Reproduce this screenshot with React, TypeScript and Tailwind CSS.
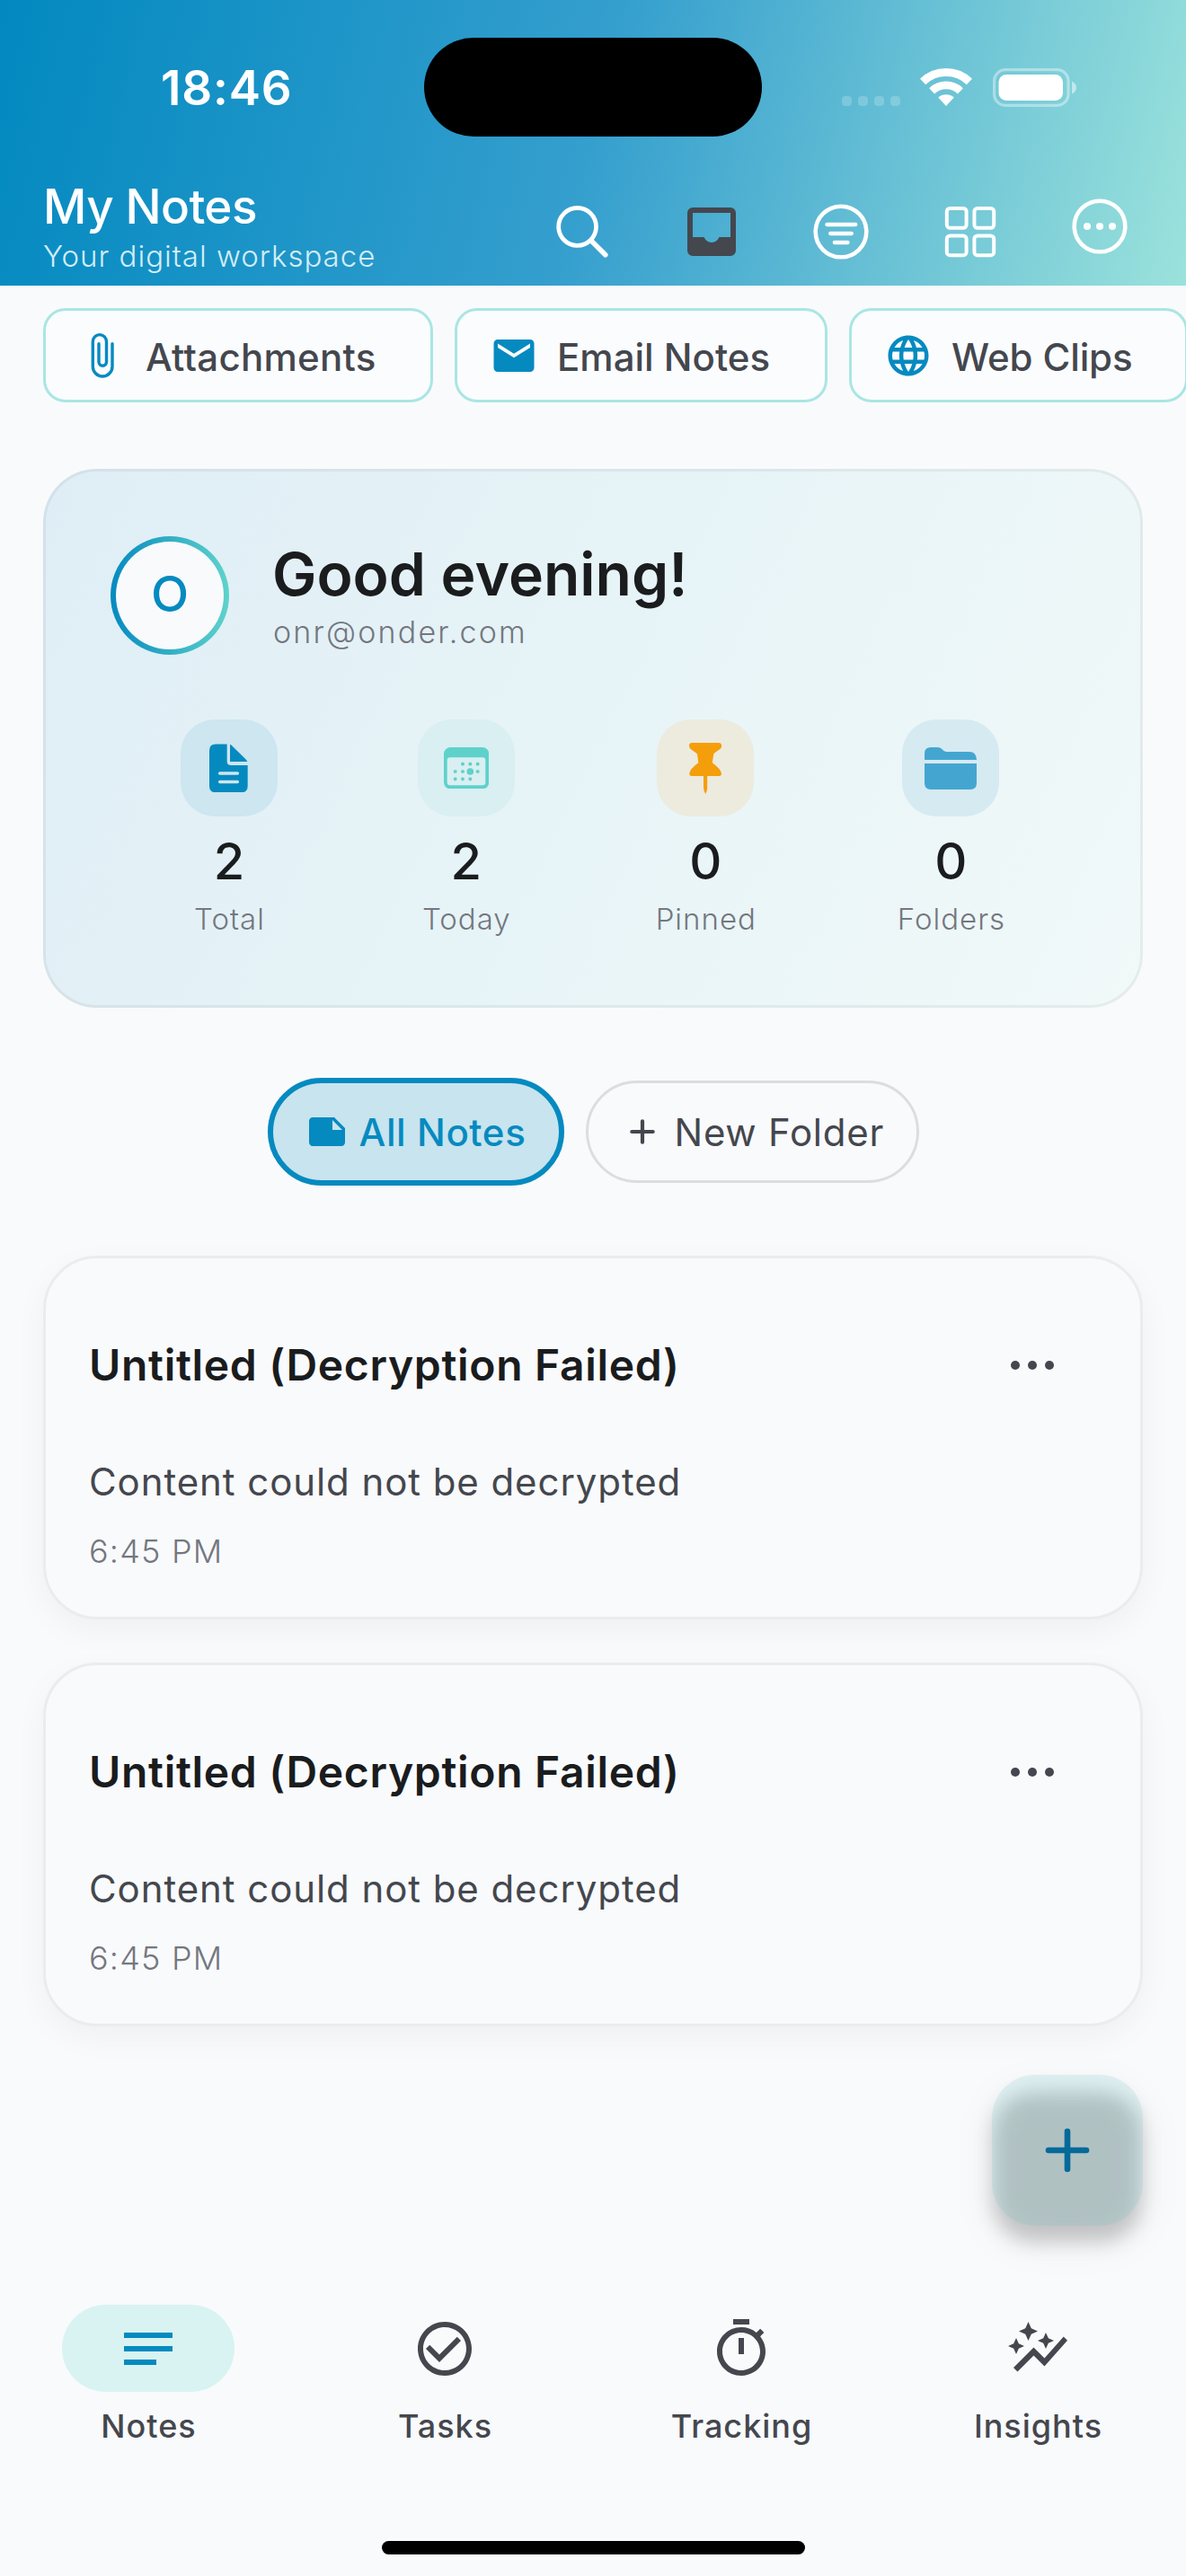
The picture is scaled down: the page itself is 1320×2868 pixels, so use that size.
import React from "react";
import {
  MdEmail,
  MdLanguage,
  MdNote,
  MdNotes,
  MdCheckCircleOutline,
  MdOutlineTimer,
  MdOutlineAutoGraph,
} from "react-icons/md";

/* ---------- status bar ---------- */

function Wifi() {
  return (
    <svg width="58" height="43" viewBox="0 0 58 43" fill="none" className="shrink-0">
      <path d="M3.1 14.9A37.5 37.5 0 0 1 54.9 14.9" stroke="#fff" strokeWidth="9" />
      <path d="M13.1 25.3A23 23 0 0 1 44.9 25.3" stroke="#fff" strokeWidth="8.6" />
      <path d="M29 42L20.2 32.6A13.3 13.3 0 0 1 37.8 32.6Z" fill="#fff" />
    </svg>
  );
}

function Battery() {
  return (
    <svg width="94" height="43" viewBox="0 0 94 43" fill="none" className="shrink-0">
      <rect x="1.6" y="1.6" width="82.4" height="39.8" rx="12.5" stroke="#fff" strokeOpacity="0.4" strokeWidth="3.2" />
      <rect x="6.5" y="7" width="71.5" height="29" rx="8.5" fill="#fff" />
      <path d="M88 14.5Q93 17 93 21.5T88 28.5Z" fill="#fff" fillOpacity="0.5" />
    </svg>
  );
}

function StatusBar() {
  return (
    <div className="flex h-[194px] items-center">
      <div className="w-[472px] shrink-0 pl-[179px] pt-[2px] text-[53px] leading-[66px] font-semibold tracking-[0.8px] text-white">
        18:46
      </div>
      <div className="h-[110px] w-[376px] shrink-0 rounded-full bg-black" />
      <div className="flex h-[43px] items-end pl-[89px]">
        <div className="mr-[22px] mb-[1px] flex gap-[7px]">
          {[0, 1, 2, 3].map((i) => (
            <div key={i} className="size-[11px] rounded-[4px] bg-white/20" />
          ))}
        </div>
        <Wifi />
        <div className="ml-[23px] flex">
          <Battery />
        </div>
      </div>
    </div>
  );
}

/* ---------- toolbar ---------- */

const SearchIcon = () => (
  <svg width="72" height="72" viewBox="0 0 72 72" fill="none" stroke="#fff" strokeLinecap="round">
    <circle cx="30.6" cy="30.4" r="20.9" strokeWidth="4.8" />
    <path d="M46 46L61.8 61.8" strokeWidth="5.6" />
  </svg>
);

const InboxIcon = () => (
  <svg width="72" height="72" viewBox="0 0 24 24" fill="#44474e">
    <path d="M5 21q-.825 0-1.413-.588T3 19V5q0-.825.588-1.413T5 3h14q.825 0 1.413.588T21 5v14q0 .825-.588 1.413T19 21H5Zm7-5q.95 0 1.725-.55T14.8 14H19V5H5v9h4.2q.3.9 1.075 1.45T12 16Z" />
  </svg>
);

const FilterIcon = () => (
  <svg width="72" height="72" viewBox="0 0 72 72" fill="none" stroke="#fff" strokeLinecap="round">
    <circle cx="36" cy="36" r="28.3" strokeWidth="4.6" />
    <path d="M20.4 28H52.3M24.2 38H47.8M28.8 48H43.5" strokeWidth="4.3" />
  </svg>
);

const GridIcon = () => (
  <svg width="72" height="72" viewBox="0 0 72 72" fill="none" stroke="#fff" strokeWidth="4">
    <rect x="9.8" y="10" width="21.8" height="21.8" rx="3.5" />
    <rect x="40.4" y="10" width="21.8" height="21.8" rx="3.5" />
    <rect x="9.8" y="40.4" width="21.8" height="21.8" rx="3.5" />
    <rect x="40.4" y="40.4" width="21.8" height="21.8" rx="3.5" />
  </svg>
);

const MoreIcon = () => (
  <svg width="72" height="72" viewBox="0 0 72 72" fill="none">
    <circle cx="36" cy="36" r="28.3" stroke="#fff" strokeWidth="4.6" />
    <g fill="#fff">
      <circle cx="22" cy="36" r="4" />
      <circle cx="36" cy="36" r="4" />
      <circle cx="50" cy="36" r="4" />
    </g>
  </svg>
);

function Header() {
  return (
    <header className="h-[318px] shrink-0 bg-[linear-gradient(103.5deg,#0289c0_0%,#359fce_50%,#9be2dc_100%)]">
      <StatusBar />
      <div className="flex justify-between pr-[24px] pl-[48px]">
        <div className="pt-[3px] text-white">
          <h1 className="text-[53px] leading-[66px] font-medium tracking-[-0.6px]">My Notes</h1>
          <p className="pt-px text-[33px] leading-[42px] font-[350] tracking-[1px] text-[#d3edf6]">
            Your digital workspace
          </p>
        </div>
        <div className="flex pt-[28px]">
          {[SearchIcon, InboxIcon, FilterIcon, GridIcon].map((Icon, i) => (
            <button key={i} className="flex h-[72px] w-[144px] justify-center">
              <Icon />
            </button>
          ))}
          <button className="-mt-[6px] flex h-[72px] w-[144px] justify-center">
            <MoreIcon />
          </button>
        </div>
      </div>
    </header>
  );
}

/* ---------- quick filter chips ---------- */

const ClipIcon = () => (
  <svg width="54" height="54" viewBox="0 0 54 54" fill="none" stroke="#058ac0" strokeWidth="3.4" strokeLinecap="round">
    <g transform="translate(14.8 2)">
      <path d="M23.2 11.6V37a10.85 11 0 0 1-21.7 0V9.5a7.6 7.9 0 0 1 15.2 0V32a4.25 4.2 0 0 1-8.5 0V11.6" />
    </g>
  </svg>
);

function Chips() {
  const chip =
    "flex h-[105px] shrink-0 items-center gap-[21px] rounded-[25px] border-[3px] border-[#a9e6e3] bg-[#fbfcfe] pl-[36px] text-[42px] font-medium text-[#44474e]";
  return (
    <div className="mt-[25px] flex gap-[24px] overflow-hidden pl-[48px]">
      <div className={`${chip} w-[434px]`}>
        <ClipIcon />
        <span className="pt-[4px] tracking-[0.27px]">Attachments</span>
      </div>
      <div className={`${chip} w-[415px]`}>
        <MdEmail className="size-[54px] shrink-0 text-[#058ac0]" />
        <span className="pt-[4px]">Email Notes</span>
      </div>
      <div className={`${chip} w-[377px]`}>
        <MdLanguage className="size-[54px] shrink-0 text-[#058ac0]" />
        <span className="pt-[4px] tracking-[-0.1px]">Web Clips</span>
      </div>
    </div>
  );
}

/* ---------- greeting card ---------- */

const DocIcon = () => (
  <svg width="43" height="54.5" viewBox="222 168 129 163">
    <path
      d="M243 169H281V226Q281 240 295 240H350V309Q350 331 328 331H244Q222 331 222 309V190Q222 169 243 169Z"
      fill="#058ac0"
    />
    <path d="M291 170Q295 171 299 176L344 220Q348 225 349 228H291Z" fill="#058ac0" />
    <path d="M257 267H316M257 295.5H316" stroke="#cde6ef" strokeWidth="10.5" strokeLinecap="round" />
  </svg>
);

const CalendarIcon = () => (
  <svg width="50.3" height="46.5" viewBox="1004 182 151 139.5">
    <rect x="1004" y="182" width="151" height="139" rx="22" fill="#5fd1cb" />
    <rect x="1015" y="216" width="128" height="93" rx="10" fill="#d9eff1" />
    <g fill="#5fd1cb">
      {[
        [1067, 238],
        [1092, 238],
        [1117, 238],
        [1042, 263],
        [1067, 263],
        [1117, 263],
        [1042, 288],
        [1067, 288],
        [1092, 288],
      ].map(([x, y]) => (
        <rect key={`${x}-${y}`} x={x - 5.5} y={y - 5.5} width="11" height="11" rx="4" />
      ))}
      <circle cx="1092" cy="263" r="11.5" />
    </g>
  </svg>
);

const PinIcon = () => (
  <svg width="36.2" height="57" viewBox="0 0 36.2 57">
    <path
      d="M3 0H33Q36.2 0 36.2 3.5Q36.2 6 33 8Q28 11 27.3 12.5L25.8 22.3Q35 29 36 34Q36 37 33.5 37H20.2V50Q20 54 18.2 57Q16.4 54 16 50V37H3Q.2 37 .3 34Q1 29 10.3 22.3L9 12.5Q8 11 3 8Q0 6 0 3.5Q0 0 3 0Z"
      fill="#f59e0b"
    />
  </svg>
);

const FolderIcon = () => (
  <svg width="58" height="47" viewBox="0 0 58 47" fill="#44a6d0">
    <path d="M0 14V7Q0 0 7 0H14.5Q17.5 0 19.5 2L21.5 4Q23 5 25 5H50Q57.6 5 58 14Z" />
    <path d="M0 18H58V40Q58 47 51 47H7Q0 47 0 40Z" />
  </svg>
);

const stats = [
  { label: "Total", value: "2", tile: "bg-[#cde6ef]", Icon: DocIcon },
  { label: "Today", value: "2", tile: "bg-[#d9eff1]", Icon: CalendarIcon },
  { label: "Pinned", value: "0", tile: "bg-[#ecebde]", Icon: PinIcon },
  { label: "Folders", value: "0", tile: "bg-[#d6eaf2]", Icon: FolderIcon },
];

function GreetingCard() {
  return (
    <section className="mx-[48px] mt-[74px] h-[600px] rounded-[60px] border-[3px] border-black/5 bg-[linear-gradient(116deg,#dfeef6_0%,#e7f4f7_50%,#f1f9f9_100%)] bg-origin-border px-[72px] pt-[72px]">
      <div className="flex gap-[48px]">
        <div className="size-[132px] rounded-full bg-[linear-gradient(90deg,#058ac0,#5fd3cb)] p-[6px]">
          <div className="flex size-full items-center justify-center rounded-full bg-[#f9fafc] pb-[3px] text-[55px] font-[530] text-[#058ac0]">
            O
          </div>
        </div>
        <div className="pt-[6px]">
          <h2 className="text-[66px] leading-[72px] font-semibold text-[#1a1c1e]">Good evening!</h2>
          <p className="mt-[5px] pl-[1px] text-[34px] leading-[48px] font-light tracking-[2.2px] text-[#74777f]">
            onr@onder.com
          </p>
        </div>
      </div>
      <div className="mt-[72px] flex justify-around">
        {stats.map(({ label, value, tile, Icon }) => (
          <div key={label} className="flex flex-col items-center">
            <div className={`flex size-[108px] items-center justify-center rounded-[38px] ${tile}`}>
              <Icon />
            </div>
            <div className="mt-[16px] text-[56px] leading-[68px] font-[550] text-[#1a1c1e]">{value}</div>
            <div className="mt-[9px] pl-px text-[33px] leading-[42px] font-[350] tracking-[1px] text-[#74777f]">
              {label}
            </div>
          </div>
        ))}
      </div>
    </section>
  );
}

/* ---------- folder pills ---------- */

function FolderPills() {
  return (
    <div className="mt-[78px] flex items-center justify-center gap-[24px] text-[42px]">
      <div className="flex h-[120px] w-[330px] items-center gap-[12px] rounded-full border-[6px] border-[#058ac0] bg-[#c8e4ee] pl-[36px] font-medium tracking-[0.6px] text-[#058ac0]">
        <MdNote className="size-[48px] shrink-0" />
        <span className="whitespace-nowrap">All Notes</span>
      </div>
      <div className="flex h-[114px] w-[371px] items-center gap-[12px] rounded-full border-[3px] border-[#dcdddf] pl-[36px] font-[380] tracking-[0.75px] text-[#44474e]">
        <svg width="48" height="48" viewBox="0 0 48 48" fill="none" className="shrink-0">
          <path d="M12.3 24H35.7M24 12.3V35.7" stroke="#44474e" strokeWidth="4.2" strokeLinecap="round" />
        </svg>
        <span className="whitespace-nowrap">New Folder</span>
      </div>
    </div>
  );
}

/* ---------- notes ---------- */

function NoteCard() {
  return (
    <article className="h-[405px] rounded-[60px] border-[3px] border-[#ebecee] bg-[#f9fafc] px-[48px] pt-[48px] shadow-[0_12px_36px_rgba(0,0,0,0.045)]">
      <div className="flex h-[142px] items-center justify-between">
        <h3 className="text-[48px] font-semibold tracking-[0.67px] text-[#1a1c1e]">Untitled (Decryption Failed)</h3>
        <div className="flex w-[144px] justify-center gap-[8.6px]">
          {[0, 1, 2].map((i) => (
            <div key={i} className="size-[10px] rounded-full bg-[#44474e]" />
          ))}
        </div>
      </div>
      <p className="mt-[29px] text-[42px] leading-[60px] font-[380] tracking-[0.92px] text-[#44474e]">
        Content could not be decrypted
      </p>
      <p className="mt-[23px] text-[36px] leading-[48px] font-light tracking-[1.2px] text-[#74777f]">6:45 PM</p>
    </article>
  );
}

/* ---------- bottom navigation ---------- */

const tabs = [
  { label: "Notes", Icon: MdNotes, active: true },
  { label: "Tasks", Icon: MdCheckCircleOutline, active: false },
  { label: "Tracking", Icon: MdOutlineTimer, active: false },
  { label: "Insights", Icon: MdOutlineAutoGraph, active: false },
];

function BottomNav() {
  return (
    <nav className="mt-auto h-[302px] shrink-0">
      <div className="grid grid-cols-4">
        {tabs.map(({ label, Icon, active }) => (
          <div key={label} className="flex flex-col items-center">
            <div
              className={`flex h-[97px] w-[192px] items-center justify-center rounded-full ${
                active ? "bg-[#d8f3f2] text-[#058ac0]" : "text-[#44474e]"
              }`}
            >
              <Icon className="size-[72px]" />
            </div>
            <span className="mt-[14px] pl-px text-[36px] leading-[48px] font-[450] tracking-[1px] text-[#44474e]">
              {label}
            </span>
          </div>
        ))}
      </div>
      <div className="mx-auto mt-[104px] h-[15px] w-[471px] rounded-full bg-black" />
    </nav>
  );
}

function AddButton() {
  return (
    <button className="absolute top-[2310px] left-[1104px] size-[168px]">
      <span className="absolute inset-0 translate-y-[18px] rounded-[48px] bg-black/7 blur-[20px]" />
      <span className="absolute inset-[1px] translate-y-[19px] rounded-[46px] bg-black/17 blur-[10px]" />
      <span className="absolute inset-0 flex items-center justify-center rounded-[48px] bg-[#58c4c0]/15">
        <svg width="50" height="50" viewBox="0 0 50 50" fill="none">
          <path d="M4 25H46M25 4V46" stroke="#046a99" strokeWidth="6.6" strokeLinecap="round" />
        </svg>
      </span>
    </button>
  );
}

export default function App() {
  return (
    <div className="relative flex h-[2868px] w-[1320px] flex-col overflow-hidden bg-[#f9fafc] font-['Inter',sans-serif]">
      <Header />
      <Chips />
      <GreetingCard />
      <FolderPills />
      <div className="mx-[48px] mt-[78px] flex flex-col gap-[48px]">
        <NoteCard />
        <NoteCard />
      </div>
      <BottomNav />
      <AddButton />
    </div>
  );
}
